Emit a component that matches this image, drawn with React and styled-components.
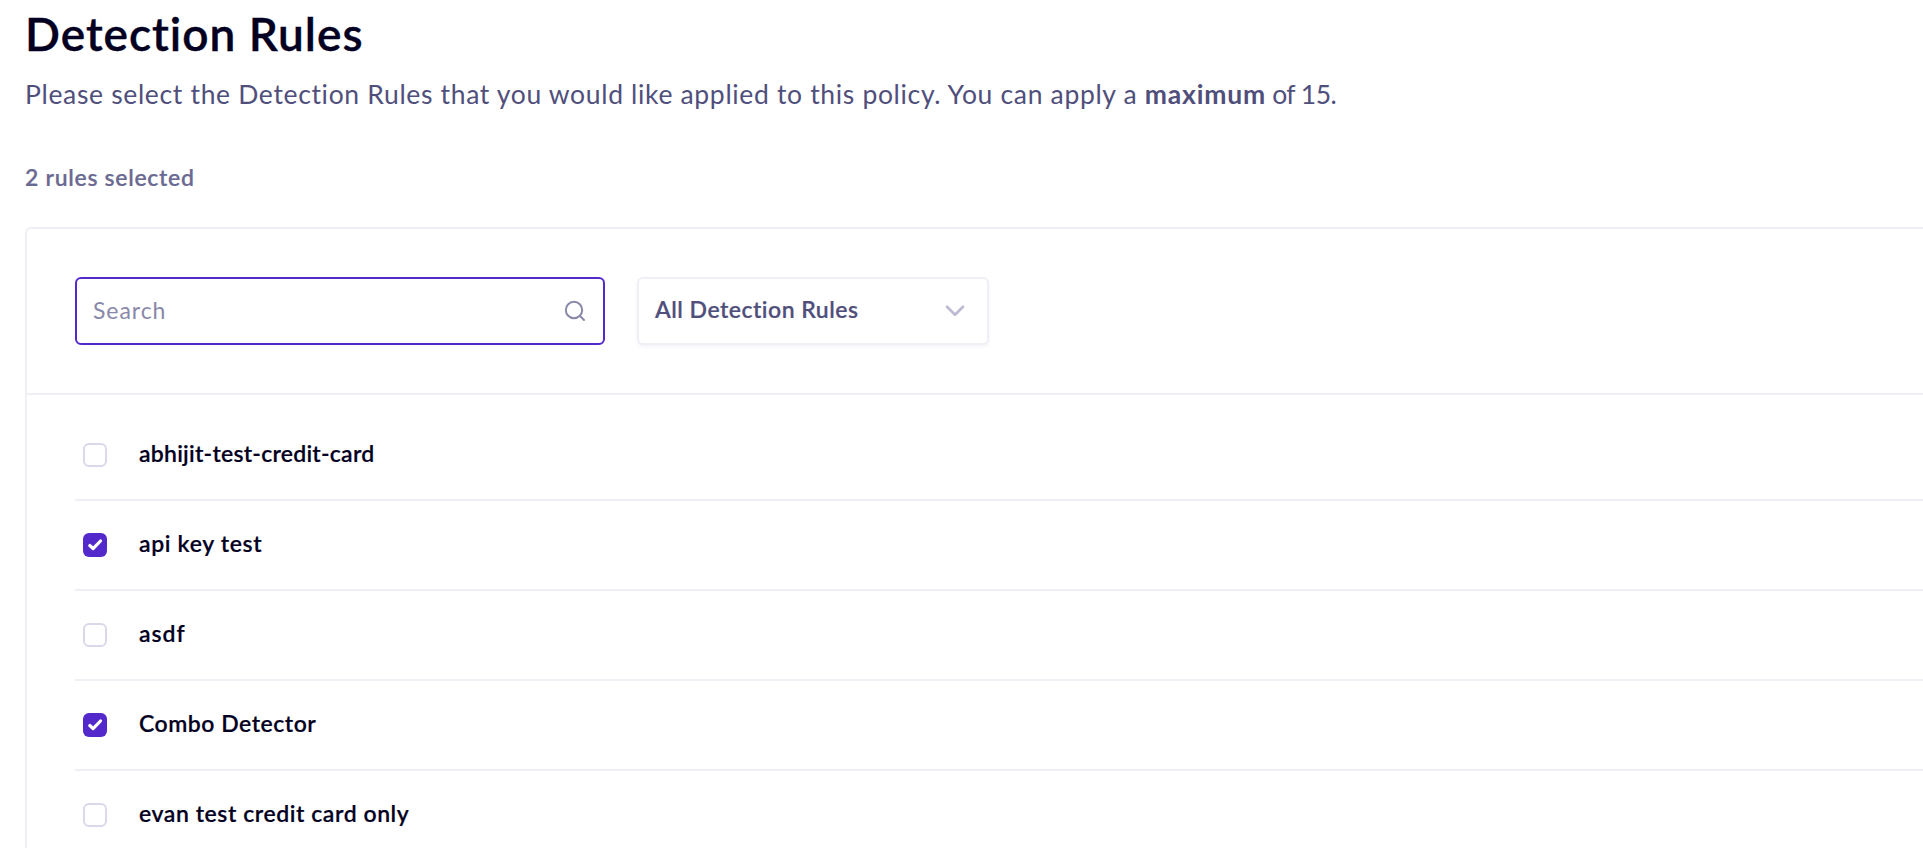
import React, { useState } from 'react';
import styled, { createGlobalStyle } from 'styled-components';

const GlobalStyle = createGlobalStyle`
  *, *::before, *::after { box-sizing: border-box; }
  body {
    margin: 0;
    background: #fff;
    overflow: hidden;
    font-family: Lato, "Liberation Sans", sans-serif;
    font-variant-ligatures: none;
  }
`;

const Page = styled.main`
  height: 848px;
  padding: 6px 0 0 25px;
  overflow: hidden;
  display: flex;
  flex-direction: column;
`;

const Title = styled.h1`
  margin: 0;
  font-size: 46px;
  line-height: 56px;
  font-weight: 600;
  letter-spacing: 1px;
  -webkit-text-stroke: 0.4px;
  color: #030021;
`;

const Description = styled.p`
  margin: 14px 0 0;
  font-size: 26.5px;
  line-height: 36px;
  letter-spacing: 0.665px;
  white-space: nowrap;
  color: #504f7c;
`;

const Emphasis = styled.strong`
  font-weight: 700;
  letter-spacing: 0.8px;
`;

const Limit = styled.span`
  letter-spacing: -0.55px;
`;

const SelectedCount = styled.p`
  margin: 51px 0 0;
  font-size: 23px;
  line-height: 28px;
  font-weight: 600;
  letter-spacing: 0.69px;
  -webkit-text-stroke: 0.2px;
  color: #6b6a92;
`;

const Panel = styled.section`
  margin-top: 36px;
  flex: 1;
  border: solid #efeff5;
  border-width: 2px 0 0 2px;
  border-top-left-radius: 6px;
`;

const Toolbar = styled.div`
  display: flex;
  gap: 32px;
  padding: 48px;
  border-bottom: 2px solid #efeff5;
`;

const SearchField = styled.label`
  display: flex;
  align-items: center;
  width: 530px;
  height: 68px;
  padding: 0 16px;
  border: 2px solid #5429cc;
  border-radius: 6px;
  color: #8988a9;
`;

const SearchInput = styled.input`
  flex: 1;
  min-width: 0;
  height: 28px;
  padding: 0 0 2px;
  border: 0;
  outline: 0;
  background: transparent;
  font: 400 23px/26px Lato, "Liberation Sans", sans-serif;
  letter-spacing: 0.95px;
  &::placeholder { color: #8988a9; opacity: 1; }
`;

const Select = styled.button`
  display: flex;
  align-items: center;
  justify-content: space-between;
  width: 352px;
  height: 68px;
  padding: 0 20px 0 16px;
  border: 2px solid #efeff5;
  border-radius: 6px;
  background: #fff;
  box-shadow: 0 2px 4px rgba(40, 36, 90, 0.05);
  color: #504f7c;
  font: 600 23px/28px Lato, "Liberation Sans", sans-serif;
  letter-spacing: 0.48px;
  -webkit-text-stroke: 0.2px;
`;

const SelectLabel = styled.span`
  padding-bottom: 4px;
`;

const Icon = styled.svg`
  display: block;
  flex: none;
  width: 24px;
  height: 24px;
  fill: none;
  stroke: ${(p) => p.$color};
  stroke-width: ${(p) => p.$weight};
  stroke-linecap: round;
  stroke-linejoin: round;
`;

const RuleList = styled.ul`
  list-style: none;
  margin: 0;
  padding: 16px 0 0 48px;
`;

const Rule = styled.li`
  display: flex;
  align-items: center;
  gap: 32px;
  height: 90px;
  padding-left: 8px;
  border-bottom: 2px solid #efeff5;
`;

const Checkbox = styled.button`
  display: block;
  width: 24px;
  height: 24px;
  padding: 0;
  border: ${(p) => (p.$checked ? '0' : '2px solid #dad8ea')};
  border-radius: 6px;
  background: ${(p) => (p.$checked ? '#5429cc' : '#fff')};
`;

const RuleName = styled.span`
  padding-bottom: 4px;
  font-size: 23px;
  line-height: 28px;
  font-weight: 600;
  letter-spacing: ${(p) => p.$tracking}px;
  -webkit-text-stroke: 0.2px;
  white-space: nowrap;
  color: #030021;
`;

const initialRules = [
  { name: 'abhijit-test-credit-card', checked: false, tracking: 0.24 },
  { name: 'api key test', checked: true, tracking: 0.66 },
  { name: 'asdf', checked: false, tracking: 0.95 },
  { name: 'Combo Detector', checked: true, tracking: 0.52 },
  { name: 'evan test credit card only', checked: false, tracking: 0.56 },
];

export default function App() {
  const [rules, setRules] = useState(initialRules);
  const toggle = (name) =>
    setRules((all) => all.map((r) => (r.name === name ? { ...r, checked: !r.checked } : r)));

  return (
    <>
      <GlobalStyle />
      <Page>
        <Title>Detection Rules</Title>
        <Description>
          Please select the Detection Rules that you would like applied to this policy. You can apply a{' '}
          <Emphasis>maximum</Emphasis>
          <Limit> of 15.</Limit>
        </Description>
        <SelectedCount>{rules.filter((r) => r.checked).length} rules selected</SelectedCount>
        <Panel>
          <Toolbar>
            <SearchField>
              <SearchInput placeholder="Search" />
              <Icon viewBox="0 0 24 24" $color="#8988a9" $weight={2}>
                <circle cx="11" cy="11" r="8.2" />
                <path d="M17 17l4 4" />
              </Icon>
            </SearchField>
            <Select type="button">
              <SelectLabel>All Detection Rules</SelectLabel>
              <Icon viewBox="0 0 24 24" $color="#bdbbd3" $weight={2.7}>
                <path d="M4 7.8l8 8 8-8" />
              </Icon>
            </Select>
          </Toolbar>
          <RuleList>
            {rules.map((rule) => (
              <Rule key={rule.name}>
                <Checkbox
                  type="button"
                  role="checkbox"
                  aria-checked={rule.checked}
                  aria-label={rule.name}
                  $checked={rule.checked}
                  onClick={() => toggle(rule.name)}
                >
                  {rule.checked && (
                    <Icon viewBox="0 0 24 24" $color="#fff" $weight={3.2}>
                      <path d="M6.8 12.5l3.3 3.1 7.4-7.6" />
                    </Icon>
                  )}
                </Checkbox>
                <RuleName $tracking={rule.tracking}>{rule.name}</RuleName>
              </Rule>
            ))}
          </RuleList>
        </Panel>
      </Page>
    </>
  );
}
